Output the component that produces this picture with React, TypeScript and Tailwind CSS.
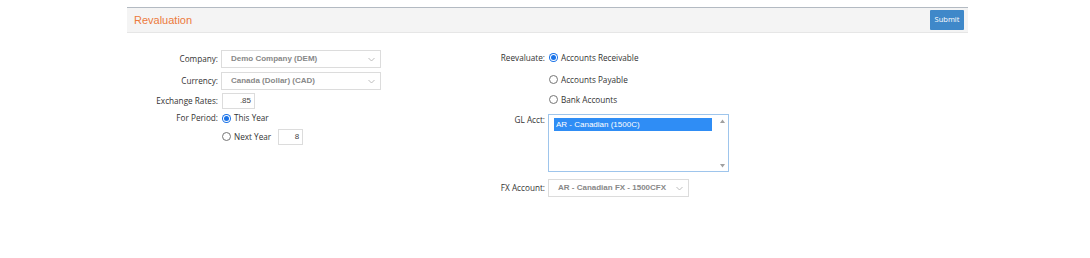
import React from 'react';

const labelFont = { fontFamily: '"Open Sans", "Liberation Sans", sans-serif' };
const arial = { fontFamily: '"Liberation Sans", Arial, sans-serif' };

function Chevron() {
  return (
    <svg width="7" height="5" viewBox="0 0 7 5" className="shrink-0">
      <path d="M0.5 1 L3.5 4 L6.5 1" fill="none" stroke="#b5b5b5" strokeWidth="0.9" />
    </svg>
  );
}

function Select({ value, width }: { value: string; width: string }) {
  return (
    <div
      className={`${width} h-[18px] border border-[#dcdcdc] bg-white flex items-center justify-between pl-[9px] pr-[5px] text-[8px] text-[#888]`}
      style={arial}
    >
      <span className="font-bold">{value}</span>
      <Chevron />
    </div>
  );
}

function Radio({ checked }: { checked?: boolean }) {
  if (checked) {
    return (
      <span className="w-[9px] h-[9px] rounded-full bg-[#1a73e8] flex items-center justify-center shrink-0">
        <span className="w-[7px] h-[7px] rounded-full bg-white flex items-center justify-center">
          <span className="w-[5px] h-[5px] rounded-full bg-[#1a73e8]" />
        </span>
      </span>
    );
  }
  return <span className="w-[9px] h-[9px] rounded-full border border-[#767676] bg-white shrink-0" />;
}

function Label({ children, w }: { children: React.ReactNode; w: string }) {
  return (
    <div className={`${w} text-right pr-[3px] text-[8.2px] text-[#333] shrink-0`} style={labelFont}>
      {children}
    </div>
  );
}

function Text({ children }: { children: React.ReactNode }) {
  return (
    <span className="text-[8.2px] text-[#333]" style={labelFont}>
      {children}
    </span>
  );
}

export default function App() {
  return (
    <div className="w-[1090px] h-[258px] bg-white">
      <div className="pt-[7px] pl-[127px]">
        <div className="w-[841px]">
          <div className="h-[26px] bg-[#f4f4f4] border-t border-[#b3bac2] border-b border-b-[#e6e6e6] flex items-center justify-between pl-[7px] pr-[4px]">
            <span className="text-[11px] text-[#ec7a3c]" style={arial}>Revaluation</span>
            <button
              className="h-[20px] w-[34px] bg-[#3f88c9] text-white text-[7.5px] rounded-[1px]"
              style={labelFont}
            >
              Submit
            </button>
          </div>

          <div className="flex pt-[17px]">
            {/* left column */}
            <div className="w-[348px] flex flex-col">
              <div className="flex items-center h-[18px]">
                <Label w="w-[94px]">Company:</Label>
                <Select value="Demo Company (DEM)" width="w-[160px]" />
              </div>
              <div className="flex items-center h-[18px] mt-[4px]">
                <Label w="w-[94px]">Currency:</Label>
                <Select value="Canada (Dollar) (CAD)" width="w-[160px]" />
              </div>
              <div className="flex items-center h-[16px] mt-[3px]">
                <Label w="w-[94px]">Exchange Rates:</Label>
                <div
                  className="ml-[1px] w-[33px] h-[16px] border border-[#dcdcdc] bg-white text-[8px] text-[#444] text-right pr-[3px] leading-[14px]"
                  style={arial}
                >
                  .85
                </div>
              </div>
              <div className="flex items-center h-[12px] mt-[3px]">
                <Label w="w-[94px]">For Period:</Label>
                <div className="flex items-center gap-[3px] ml-[1px]">
                  <Radio checked />
                  <Text>This Year</Text>
                </div>
              </div>
              <div className="flex items-center h-[16px] mt-[5px]">
                <div className="w-[94px] shrink-0" />
                <div className="flex items-center gap-[3px] ml-[1px]">
                  <Radio />
                  <Text>Next Year</Text>
                </div>
                <div
                  className="ml-[7px] w-[25px] h-[16px] border border-[#dcdcdc] bg-white text-[8px] text-[#444] text-right pr-[3px] leading-[14px]"
                  style={arial}
                >
                  8
                </div>
              </div>
            </div>

            {/* right column */}
            <div className="flex flex-col">
              <div className="flex items-center h-[16px]">
                <Label w="w-[73px]">Reevaluate:</Label>
                <div className="flex items-center gap-[3px] ml-[1px]">
                  <Radio checked />
                  <Text>Accounts Receivable</Text>
                </div>
              </div>
              <div className="flex items-center h-[16px] mt-[6px]">
                <div className="w-[73px] shrink-0" />
                <div className="flex items-center gap-[3px] ml-[1px]">
                  <Radio />
                  <Text>Accounts Payable</Text>
                </div>
              </div>
              <div className="flex items-center h-[16px] mt-[4px]">
                <div className="w-[73px] shrink-0" />
                <div className="flex items-center gap-[3px] ml-[1px]">
                  <Radio />
                  <Text>Bank Accounts</Text>
                </div>
              </div>
              <div className="flex items-start mt-[6px]">
                <div className="pt-[0px]">
                  <Label w="w-[73px]">GL Acct:</Label>
                </div>
                <div className="w-[181px] h-[58px] border border-[#9ec5ec] bg-white flex pl-[5px] pt-[3px] pr-[2px]">
                  <div className="flex-1">
                    <div className="h-[13px] bg-[#2f8df5] text-white text-[8px] pl-[2px] leading-[13px] mr-[6px]" style={arial}>
                      AR - Canadian (1500C)
                    </div>
                  </div>
                  <div className="w-[8px] flex flex-col justify-between items-center pb-[3px] pt-[1px]">
                    <svg width="5" height="4" viewBox="0 0 5 4"><path d="M0 4 L2.5 0.5 L5 4Z" fill="#a0a0a0" /></svg>
                    <svg width="5" height="4" viewBox="0 0 5 4"><path d="M0 0 L2.5 3.5 L5 0Z" fill="#a0a0a0" /></svg>
                  </div>
                </div>
              </div>
              <div className="flex items-center h-[18px] mt-[7px]">
                <Label w="w-[73px]">FX Account:</Label>
                <Select value="AR - Canadian FX - 1500CFX" width="w-[141px]" />
              </div>
            </div>
          </div>
        </div>
      </div>
    </div>
  );
}
